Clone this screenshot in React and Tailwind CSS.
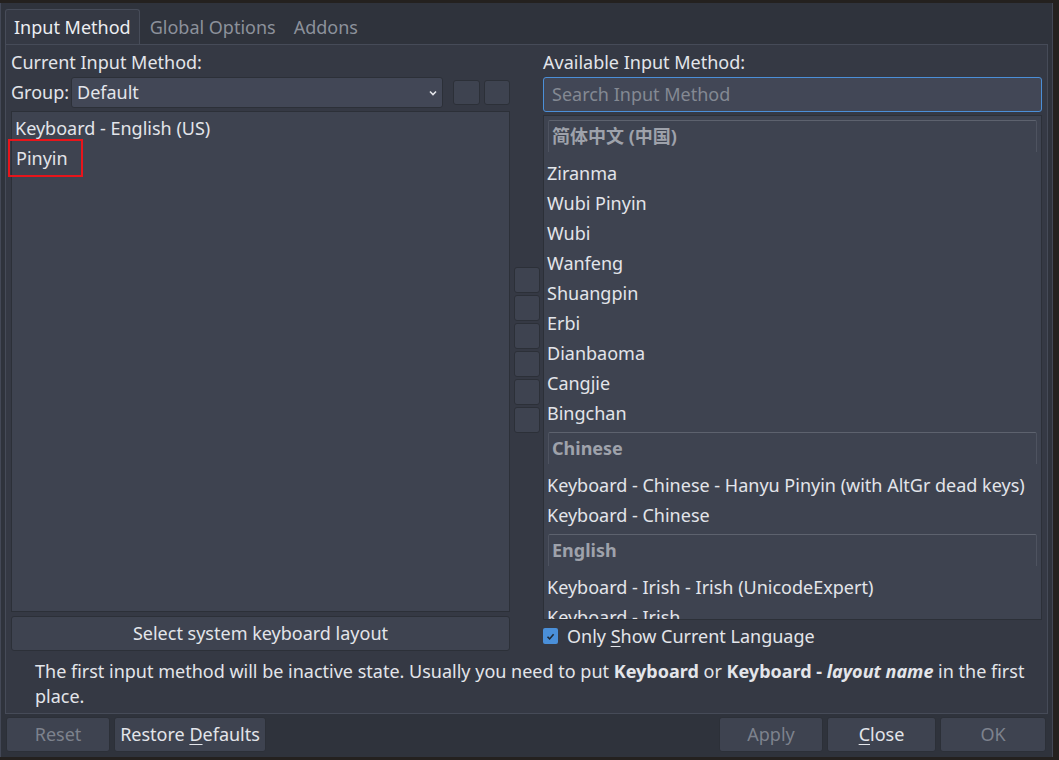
import React from 'react';

const font = { fontFamily: '"Noto Sans", "Noto Sans CJK SC", sans-serif' };

function Btn({ children, disabled, className = '' }) {
  return (
    <div
      className={`flex items-center justify-center rounded-[3px] border border-[#2c3038] bg-[#3e4350] text-[18px] ${
        disabled ? 'text-[#7d828d]' : 'text-[#e3e5ea]'
      } ${className}`}
    >
      {children}
    </div>
  );
}

function Header({ children }) {
  return (
    <div className="mx-[4px] mt-[4px] h-[32px] rounded-t-[2px] border-t border-x border-t-[#5d626e] border-x-[#4e5360] px-[3px] flex items-center text-[18px] font-bold text-[#9ea2ab]">
      {children}
    </div>
  );
}

function Item({ children }) {
  return <div className="h-[30px] flex items-center px-[3px] text-[18px] text-[#e3e5ea] whitespace-nowrap">{children}</div>;
}

export default function App() {
  const chinese = ['Ziranma', 'Wubi Pinyin', 'Wubi', 'Wanfeng', 'Shuangpin', 'Erbi', 'Dianbaoma', 'Cangjie', 'Bingchan'];
  return (
    <div className="w-[1059px] h-[760px] bg-[#24211f] overflow-hidden" style={font}>
      <div className="mt-[3px] w-[1053px] h-[754px] bg-[#2f333c] border-l border-r border-[#434856] flex flex-col">
        {/* Tabs */}
        <div className="h-[41px] flex items-end pl-[4px] text-[18px]">
          <div className="h-[35px] px-[8px] flex items-center bg-[#353944] border border-b-0 border-[#474c59] rounded-t-[3px] text-[#eceef2]">
            Input Method
          </div>
          <div className="h-[34px] px-[10px] flex items-center text-[#8c919b]">Global Options</div>
          <div className="h-[34px] px-[8px] flex items-center text-[#8c919b]">Addons</div>
        </div>

        {/* Panel */}
        <div className="ml-[4px] w-[1043px] h-[670px] bg-[#353944] border border-[#464b58] flex flex-col">
          <div className="flex pl-[5px] pt-[6px]">
            {/* Left column */}
            <div className="w-[499px] flex flex-col">
              <div className="h-[22px] flex items-center text-[18px] text-[#e3e5ea]">Current Input Method:</div>
              <div className="mt-[4px] h-[31px] flex items-center">
                <span className="w-[60px] text-[18px] text-[#e3e5ea]">Group:</span>
                <div className="w-[372px] h-[31px] rounded-[3px] border border-[#2c3038] bg-[#424756] flex items-center justify-between pl-[5px] pr-[4px] text-[18px] text-[#e3e5ea]">
                  <span>Default</span>
                  <svg width="10" height="8" viewBox="0 0 10 8">
                    <path d="M2 2.5 L5 5.5 L8 2.5" stroke="#e3e5ea" strokeWidth="1.6" fill="none" />
                  </svg>
                </div>
                <div className="ml-[10px] w-[27px] h-[25px] rounded-[3px] border border-[#2c3038] bg-[#3e4350]" />
                <div className="ml-[4px] w-[26px] h-[25px] rounded-[3px] border border-[#2c3038] bg-[#3e4350]" />
              </div>
              <div className="mt-[3px] h-[501px] bg-[#3e4350] border border-[#2c3038] pt-[1px]">
                <Item>Keyboard - English (US)</Item>
                <div className="h-[30px] flex items-center">
                  <span className="-ml-[4px] pl-[6px] pr-[13px] h-[38px] flex items-center border-2 border-[#e8151b] text-[18px] text-[#e3e5ea]">Pinyin</span>
                </div>
              </div>
              <Btn className="mt-[4px] h-[35px]">Select system keyboard layout</Btn>
            </div>

            {/* Middle buttons */}
            <div className="w-[33px] flex flex-col items-center pt-[216px] gap-[2px]">
              {[0, 1, 2, 3, 4, 5].map((i) => (
                <div key={i} className="w-[26px] h-[26px] rounded-[3px] border border-[#2c3038] bg-[#3e4350]" />
              ))}
            </div>

            {/* Right column */}
            <div className="w-[499px] flex flex-col">
              <div className="h-[22px] flex items-center text-[18px] text-[#e3e5ea]">Available Input Method:</div>
              <div className="mt-[4px] h-[35px] rounded-[3px] border border-[#4b8fd8] bg-[#424756] flex items-center px-[8px] text-[18px] text-[#848993]">
                Search Input Method
              </div>
              <div className="mt-[3px] h-[505px] bg-[#3e4350] border border-[#2c3038] overflow-hidden">
                <Header>简体中文 (中国)</Header>
                <div className="h-[6px]" />
                {chinese.map((c) => (
                  <Item key={c}>{c}</Item>
                ))}
                <Header>Chinese</Header>
                <div className="h-[6px]" />
                <Item>Keyboard - Chinese - Hanyu Pinyin (with AltGr dead keys)</Item>
                <Item>Keyboard - Chinese</Item>
                <Header>English</Header>
                <div className="h-[6px]" />
                <Item>Keyboard - Irish - Irish (UnicodeExpert)</Item>
                <Item>Keyboard - Irish</Item>
              </div>
              <div className="mt-[4px] h-[24px] flex items-center">
                <div className="w-[15px] h-[16px] rounded-[2px] bg-[#4a8fd9] flex items-center justify-center">
                  <svg width="11" height="11" viewBox="0 0 11 11">
                    <path d="M2.5 5.8 L4.6 7.9 L8.6 3.2" stroke="#1f2a36" strokeWidth="1.6" fill="none" />
                  </svg>
                </div>
                <span className="ml-[9px] text-[18px] text-[#e3e5ea]">
                  Only <span className="underline underline-offset-[3px]">S</span>how Current Language
                </span>
              </div>
            </div>
          </div>

          {/* Info text */}
          <div className="mt-[8px] pl-[29px] pr-[20px] text-[18px] leading-[25px] text-[#e3e5ea]">
            The first input method will be inactive state. Usually you need to put <b>Keyboard</b> or{' '}
            <b>
              Keyboard - <i>layout name</i>
            </b>{' '}
            in the first place.
          </div>
        </div>

        {/* Bottom buttons */}
        <div className="mt-[3px] flex pl-[5px] pr-[6px]">
          <Btn disabled className="w-[104px] h-[35px]">Reset</Btn>
          <Btn className="ml-[4px] w-[152px] h-[35px]">
            <span>
              Restore <span className="underline underline-offset-[3px]">D</span>efaults
            </span>
          </Btn>
          <div className="flex-1" />
          <Btn disabled className="w-[104px] h-[35px]">Apply</Btn>
          <Btn className="ml-[4px] w-[109px] h-[35px]">
            <span>
              <span className="underline underline-offset-[3px]">C</span>lose
            </span>
          </Btn>
          <Btn disabled className="ml-[4px] w-[106px] h-[35px]">OK</Btn>
        </div>
      </div>
    </div>
  );
}
